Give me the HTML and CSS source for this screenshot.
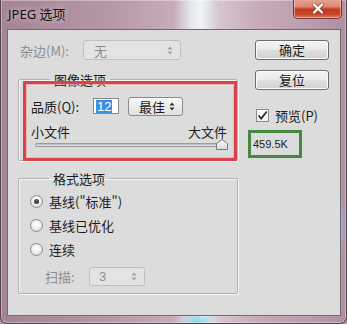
FILE: index.html
```html
<!DOCTYPE html>
<html lang="zh-CN">
<head>
<meta charset="utf-8">
<title>JPEG 选项</title>
<link rel="stylesheet" href="styles.css">
</head>
<body>
<div class="win">
  <div class="titlebar">
    <span class="title">JPEG 选项</span>
    <div class="close">
      <svg width="14" height="11" viewBox="0 0 14 11"><path d="M3 1.5 L11 9.5 M11 1.5 L3 9.5" stroke="#6b2a20" stroke-width="4" stroke-linecap="round" opacity="0.55"/><path d="M3 1.5 L11 9.5 M11 1.5 L3 9.5" stroke="#ffffff" stroke-width="2.4" stroke-linecap="round"/></svg>
    </div>
  </div>
  <div class="client">
    <div class="left">
      <div class="matte-row">
        <span class="lbl disabled matte-lbl">杂边(M):</span>
        <div class="select disabled matte-sel">
          <span>无</span>
          <svg class="arrows" width="6" height="9" viewBox="0 0 6 9"><path d="M3 0.5 L5.5 3.5 L0.5 3.5 Z M3 8.5 L5.5 5.5 L0.5 5.5 Z" fill="#a2a2a2"/></svg>
        </div>
      </div>

      <fieldset class="group img-group">
        <legend>图像选项</legend>
        <div class="q-row">
          <span class="lbl q-lbl">品质(Q):</span>
          <div class="num"><span class="sel-text">12</span></div>
          <div class="select q-sel">
            <span>最佳</span>
            <svg class="arrows" width="6" height="9" viewBox="0 0 6 9"><path d="M3 0.5 L5.5 3.5 L0.5 3.5 Z M3 8.5 L5.5 5.5 L0.5 5.5 Z" fill="#333"/></svg>
          </div>
        </div>
        <div class="size-row">
          <span>小文件</span>
          <span>大文件</span>
        </div>
        <div class="slider">
          <div class="track"></div>
          <svg class="thumb" width="12" height="11" viewBox="0 0 12 11">
            <defs><linearGradient id="tg" x1="0" y1="0" x2="0" y2="1"><stop offset="0" stop-color="#ffffff"/><stop offset="1" stop-color="#d6d6d6"/></linearGradient></defs>
            <path d="M0.5 10.5 L0.5 4.5 L6 0.5 L11.5 4.5 L11.5 10.5 Z" fill="url(#tg)" stroke="#7a7a7a"/>
          </svg>
        </div>
      </fieldset>

      <fieldset class="group fmt-group">
        <legend>格式选项</legend>
        <div class="radio-row"><span class="radio on"></span><span>基线("标准")</span></div>
        <div class="radio-row"><span class="radio"></span><span>基线已优化</span></div>
        <div class="radio-row"><span class="radio"></span><span>连续</span></div>
        <div class="scan-row">
          <span class="lbl disabled scan-lbl">扫描:</span>
          <div class="select disabled scan-sel">
            <span>3</span>
            <svg class="arrows" width="6" height="9" viewBox="0 0 6 9"><path d="M3 0.5 L5.5 3.5 L0.5 3.5 Z M3 8.5 L5.5 5.5 L0.5 5.5 Z" fill="#a2a2a2"/></svg>
          </div>
        </div>
      </fieldset>
    </div>

    <div class="right">
      <div class="btn">确定</div>
      <div class="btn">复位</div>
      <div class="check-row">
        <span class="checkbox"><svg width="13" height="13" viewBox="0 0 13 13"><path d="M2.5 6.5 L5.2 9.5 L10.8 2.5" fill="none" stroke="#2b2b2b" stroke-width="1.8"/></svg></span>
        <span>预览(P)</span>
      </div>
      <div class="filesize">459.5K</div>
    </div>

    <div class="mark-red"></div>
  </div>
</div>
</body>
</html>
```

FILE: styles.css
```css
* { box-sizing: border-box; }
html, body { margin: 0; padding: 0; }
body {
  width: 347px;
  height: 324px;
  overflow: hidden;
  font-family: "Noto Sans CJK SC", "Noto Sans", sans-serif;
  font-size: 13px;
  color: #1c1c1c;
  background: #b495a6;
}

.win {
  height: 324px;
  display: flex;
  flex-direction: column;
  padding: 0 5px 7px 6px;
  border: 1px solid #54434e;
  border-top: 0;
  border-radius: 0 0 7px 7px;
  background:
    radial-gradient(ellipse 6px 40px at 338px 225px, rgba(120, 215, 235, 0.9), rgba(120, 215, 235, 0) 100%),
    radial-gradient(ellipse 18px 10px at 196px 322px, rgba(110, 210, 230, 0.9), rgba(110, 210, 230, 0) 100%),
    linear-gradient(90deg, #a48393 0%, #b596a7 30%, #c7abbb 50%, #e4e6ee 55%, #f1f4f8 58%, #d6c6d2 63%, #c7a9b9 75%, #bb9caf 90%, #b08ea1 100%);
  box-shadow: inset 0 0 0 1px rgba(255, 255, 255, 0.35);
}

.titlebar {
  height: 29px;
  display: flex;
  align-items: flex-start;
}
.title {
  padding-left: 1px;
  line-height: 29px;
  font-family: "Noto Sans", "Noto Sans CJK SC", sans-serif;
  font-size: 13px;
  color: #111;
  text-shadow: 0 0 6px rgba(255, 255, 255, 0.7);
}
.close {
  margin-left: auto;
  margin-right: -1px;
  margin-top: -1px;
  width: 49px;
  height: 20px;
  border: 1px solid #6e3b3b;
  border-top: 0;
  border-radius: 0 0 5px 5px;
  background: linear-gradient(180deg, #e9a796 0%, #dd8670 40%, #c43a1e 55%, #c9462a 80%, #e2785e 100%);
  box-shadow: inset 0 0 0 1px rgba(255, 220, 210, 0.5);
  display: flex;
  align-items: center;
  justify-content: center;
}

.client {
  flex: 1;
  position: relative;
  display: flex;
  border: 1px solid #6f6a6d;
  background: #dcdcdc;
}

.left {
  width: 230px;
  padding: 10px 0 0 10px;
  display: flex;
  flex-direction: column;
}

.disabled { color: #8e8e8e; }

.matte-row {
  height: 20px;
  display: flex;
  align-items: center;
}
.matte-lbl {
  margin-left: 2px;
  width: 63px;
}

.select {
  display: flex;
  align-items: center;
  justify-content: space-between;
  border: 1px solid #8b8b8b;
  border-radius: 3px;
  background: linear-gradient(180deg, #f7f7f7 0%, #ececec 50%, #e0e0e0 100%);
  padding: 0 7px 0 10px;
}
.select.disabled {
  border-color: #c0c0c0;
  background: #e3e3e3;
}
.matte-sel { width: 98px; height: 20px; padding-left: 10px; }

.group {
  margin: 0;
  padding: 0;
  border: 1px solid #b3b3b3;
  border-radius: 2px;
  box-shadow: 1px 1px 0 #f4f4f4, inset 1px 1px 0 #f4f4f4;
  min-width: 0;
}
.group legend {
  margin-left: 19px;
  padding: 0 4px;
  line-height: 15px;
  color: #1c1c1c;
}

.img-group {
  margin-top: 12px;
  padding: 0 10px 10px 12px;
}
.q-row {
  margin-top: 9px;
  height: 20px;
  display: flex;
  align-items: center;
}
.q-lbl { width: 62px; }
.num {
  width: 26px;
  height: 16px;
  border: 1px solid #8a8a8a;
  background: #fff;
  display: flex;
  align-items: center;
  padding-left: 2px;
}
.sel-text {
  background: #3a8ee6;
  color: #fff;
  font-family: "Liberation Sans", "Noto Sans", sans-serif;
  font-size: 13px;
  line-height: 13px;
  padding: 0 1px;
}
.q-sel {
  margin-left: 9px;
  width: 55px;
  height: 19px;
  padding-left: 10px;
}

.size-row {
  margin-top: 8px;
  display: flex;
  justify-content: space-between;
  line-height: 16px;
}

.slider {
  position: relative;
  height: 10px;
  margin-left: 4px;
}
.track {
  position: absolute;
  left: 0;
  right: 0;
  top: 3px;
  height: 4px;
  border: 1px solid #9b9b9b;
  border-radius: 2px;
  background: linear-gradient(180deg, #b9b9b9, #e8e8e8);
}
.thumb {
  position: absolute;
  right: -1px;
  top: -1px;
}

.fmt-group {
  margin-top: 10px;
  padding: 0 0 7px 11px;
}
.radio-row {
  height: 20px;
  display: flex;
  align-items: center;
  gap: 6px;
  margin-top: 4px;
}
.radio-row:first-of-type { margin-top: 5px; }
.radio {
  width: 13px;
  height: 13px;
  border-radius: 50%;
  border: 1px solid #8a8a8a;
  background: radial-gradient(circle at 50% 40%, #ffffff 0%, #f0f0f0 45%, #cfcfcf 100%);
  display: flex;
  align-items: center;
  justify-content: center;
}
.radio.on::after {
  content: "";
  width: 5px;
  height: 5px;
  border-radius: 50%;
  background: radial-gradient(circle at 40% 35%, #666 0%, #1a1a1a 100%);
}

.scan-row {
  margin-top: 7px;
  height: 20px;
  display: flex;
  align-items: center;
  padding-left: 15px;
}
.scan-lbl { width: 44px; }
.scan-sel {
  width: 56px;
  height: 19px;
  padding-left: 9px;
  font-family: "Liberation Sans", "Noto Sans", sans-serif;
}

.right {
  margin-left: 10px;
  padding-top: 10px;
  display: flex;
  flex-direction: column;
  align-items: flex-start;
}
.btn {
  margin-left: 7px;
  width: 74px;
  height: 20px;
  border: 1px solid #6d6d6d;
  border-radius: 3px;
  background: linear-gradient(180deg, #f3f3f3 0%, #ebebeb 45%, #dddddd 55%, #d3d3d3 100%);
  box-shadow: inset 0 0 0 1px #fbfbfb;
  display: flex;
  align-items: center;
  justify-content: center;
  line-height: 18px;
}
.btn + .btn { margin-top: 10px; }

.check-row {
  margin-top: 18px;
  margin-left: 8px;
  display: flex;
  align-items: center;
  gap: 6px;
  height: 15px;
}
.checkbox {
  width: 13px;
  height: 13px;
  border: 1px solid #8a8a8a;
  background: linear-gradient(180deg, #ffffff, #f0f0f0);
  display: flex;
}
.checkbox svg { margin: -1px; }

.filesize {
  margin-top: 7px;
  width: 54px;
  height: 28px;
  border: 3px solid #44893f;
  display: flex;
  align-items: center;
  padding-left: 2px;
  font-family: "Liberation Sans", "Noto Sans", sans-serif;
  font-size: 11px;
  color: #1c1c1c;
}

.mark-red {
  position: absolute;
  left: 15px;
  top: 51px;
  width: 214px;
  height: 80px;
  border: 3px solid #d8444a;
  box-shadow: inset 0 0 0 1px rgba(240, 150, 150, 0.5);
  pointer-events: none;
}
```
